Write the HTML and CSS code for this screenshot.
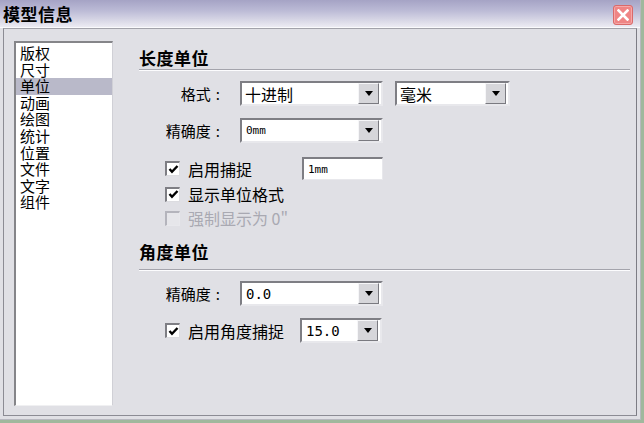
FILE: index.html
```html
<!DOCTYPE html>
<html lang="zh-CN">
<head>
<meta charset="utf-8">
<title>模型信息</title>
<link rel="stylesheet" href="styles.css">
</head>
<body>
<div class="dialog">
  <div class="titlebar">
    <span class="title">模型信息</span>
    <span class="close"><svg width="12" height="12" viewBox="0 0 12 12"><path d="M1.5 1.5 L10.5 10.5 M10.5 1.5 L1.5 10.5" stroke="#fff" stroke-width="2.6" stroke-linecap="square"/></svg></span>
  </div>
  <div class="panel">
    <ul class="nav">
      <li>版权</li>
      <li>尺寸</li>
      <li class="selected">单位</li>
      <li>动画</li>
      <li>绘图</li>
      <li>统计</li>
      <li>位置</li>
      <li>文件</li>
      <li>文字</li>
      <li>组件</li>
    </ul>
    <div class="content">
      <div class="section-title s1">长度单位</div>
      <div class="sep sep1"></div>

      <div class="row r-format">
        <span class="label">格式<span class="colon">:</span></span>
        <div class="combo w-main"><span class="val">十进制</span><span class="btn"><svg width="8" height="5" viewBox="0 0 8 5"><polygon points="0,0 8,0 4,5" fill="#000"/></svg></span></div>
        <div class="combo w-unit"><span class="val">毫米</span><span class="btn"><svg width="8" height="5" viewBox="0 0 8 5"><polygon points="0,0 8,0 4,5" fill="#000"/></svg></span></div>
      </div>

      <div class="row r-prec">
        <span class="label">精确度<span class="colon">:</span></span>
        <div class="combo w-main"><span class="val mono-s">0mm</span><span class="btn"><svg width="8" height="5" viewBox="0 0 8 5"><polygon points="0,0 8,0 4,5" fill="#000"/></svg></span></div>
      </div>

      <div class="check-row cr1">
        <span class="box"><svg width="11" height="11" viewBox="0 0 11 11"><path d="M1.5 5 L4 7.8 L9.5 2" fill="none" stroke="#000" stroke-width="2.4"/></svg></span>
        <span class="ctext w-snap">启用捕捉</span>
        <div class="field"><span class="mono-s">1mm</span></div>
      </div>

      <div class="check-row cr2">
        <span class="box"><svg width="11" height="11" viewBox="0 0 11 11"><path d="M1.5 5 L4 7.8 L9.5 2" fill="none" stroke="#000" stroke-width="2.4"/></svg></span>
        <span class="ctext">显示单位格式</span>
      </div>

      <div class="check-row cr3 disabled">
        <span class="box"></span>
        <span class="ctext">强制显示为 0"</span>
      </div>

      <div class="section-title s2">角度单位</div>
      <div class="sep sep2"></div>

      <div class="row r-aprec">
        <span class="label">精确度<span class="colon">:</span></span>
        <div class="combo w-main"><span class="val mono-l">0.0</span><span class="btn"><svg width="8" height="5" viewBox="0 0 8 5"><polygon points="0,0 8,0 4,5" fill="#000"/></svg></span></div>
      </div>

      <div class="check-row cr4">
        <span class="box"><svg width="11" height="11" viewBox="0 0 11 11"><path d="M1.5 5 L4 7.8 L9.5 2" fill="none" stroke="#000" stroke-width="2.4"/></svg></span>
        <span class="ctext w-asnap">启用角度捕捉</span>
        <div class="combo w-angle"><span class="val mono-l">15.0</span><span class="btn"><svg width="8" height="5" viewBox="0 0 8 5"><polygon points="0,0 8,0 4,5" fill="#000"/></svg></span></div>
      </div>
    </div>
  </div>
</div>
</body>
</html>
```

FILE: styles.css
```css
html, body {
  margin: 0;
  padding: 0;
}

body {
  width: 644px;
  height: 423px;
  overflow: hidden;
  background: #a0b89d;
  font-family: "Noto Sans CJK SC", "Noto Sans", sans-serif;
  color: #000;
}

.dialog {
  width: 641px;
  height: 420px;
  background: #e0e0e5;
  display: flex;
  flex-direction: column;
  box-sizing: border-box;
  border-right: 1px solid #b8b8c0;
  border-bottom: 1px solid #b8b8c0;
}

.titlebar {
  height: 27px;
  flex: none;
  display: flex;
  align-items: center;
  padding: 0 7px 0 3px;
  background: linear-gradient(#a5a3c5 0%, #bcbbd6 40%, #dcdbe8 80%, #ecebf3 100%);
  border-bottom: 1px solid #fafafc;
}

.title {
  font-weight: bold;
  font-size: 17px;
  letter-spacing: 0.5px;
  line-height: 20px;
}

.close {
  margin-left: auto;
  width: 20px;
  height: 20px;
  box-sizing: border-box;
  border-radius: 3px;
  background: #ef8585;
  border: 1px solid #d96a6a;
  box-shadow: inset 0 0 0 1px #f6a8a8;
  display: flex;
  align-items: center;
  justify-content: center;
  margin-top: 2px;
}

.panel {
  flex: 1;
  margin: 0 3px 3px 3px;
  border-top: 1px solid #a2a2aa;
  border-left: 1px solid #8c8c94;
  border-right: 1px solid #7c7c84;
  border-bottom: 1px solid #8c8c94;
  display: flex;
  align-items: flex-start;
  padding: 12px 0 9px 10px;
}

.nav {
  list-style: none;
  margin: 0;
  padding: 2px 0 0 0;
  width: 99px;
  height: 365px;
  box-sizing: border-box;
  background: #fff;
  border-style: solid;
  border-width: 2px 1px 1px 2px;
  border-color: #858589 #d0d0d6 #f0f0f2 #858589;
  font-size: 15px;
  line-height: 16.6px;
}

.nav li {
  padding-left: 4px;
  height: 16.6px;
  white-space: nowrap;
}

.nav li.selected {
  background: #b9b9c9;
}

.content {
  margin-left: 26px;
  width: 491px;
  display: flex;
  flex-direction: column;
}

.section-title {
  font-weight: bold;
  font-size: 17px;
  letter-spacing: 0.5px;
  line-height: 20px;
  height: 20px;
}

.s1 { margin-top: 7px; }
.s2 { margin-top: 14px; }

.sep {
  height: 1px;
  border-top: 1px solid #a4a4ac;
  background: #fcfcfe;
}

.sep1 { margin-top: 1px; }
.sep2 { margin-top: 7px; }

.row {
  display: flex;
  align-items: center;
  height: 25px;
}

.r-format { margin-top: 10px; }
.r-prec { margin-top: 12px; }
.r-aprec { margin-top: 10px; }

.label {
  width: 57px;
  margin-left: 24px;
  margin-right: 20px;
  text-align: right;
  font-size: 15px;
  white-space: nowrap;
}

.colon {
  margin-left: 5px;
}

.combo {
  display: flex;
  box-sizing: border-box;
  height: 25px;
  background: #fff;
  border-style: solid;
  border-width: 2px;
  border-color: #7e7e84 #e8e8ec #e8e8ec #7e7e84;
  padding: 0 2px 0 0;
  align-items: center;
}

.w-main { width: 143px; }
.w-unit { width: 115px; margin-left: 12px; }
.w-angle { width: 82px; height: 25px; }

.combo .val {
  flex: 1;
  padding-left: 3px;
  font-size: 16px;
  white-space: nowrap;
}

.combo .btn {
  width: 21px;
  height: 21px;
  box-sizing: border-box;
  background: #d6d6da;
  border-style: solid;
  border-width: 1px;
  border-color: #f6f6f8 #7a7a80 #7a7a80 #f6f6f8;
  display: flex;
  align-items: center;
  justify-content: center;
}

.mono-s,
.combo .val.mono-s {
  font-family: "DejaVu Sans Mono", monospace;
  font-size: 11px;
  padding-left: 4px;
}

.mono-l,
.combo .val.mono-l {
  font-family: "DejaVu Sans Mono", monospace;
  font-size: 14px;
  padding-left: 4px;
}

.check-row {
  display: flex;
  align-items: center;
  margin-left: 26px;
  height: 20px;
}

.cr1 { margin-top: 14px; height: 23px; }
.cr2 { margin-top: 4px; }
.cr3 { margin-top: 4px; }
.cr4 { margin-top: 12px; height: 25px; }

.box {
  width: 15px;
  height: 15px;
  box-sizing: border-box;
  background: #fff;
  border-style: solid;
  border-width: 2px 1px 1px 2px;
  border-color: #7e7e84 #dcdce0 #dcdce0 #7e7e84;
  display: flex;
  align-items: center;
  justify-content: center;
  flex: none;
}

.ctext {
  margin-left: 8px;
  font-size: 16px;
  white-space: nowrap;
}

.w-snap { width: 114px; }
.w-asnap { width: 112px; }

.field {
  width: 81px;
  height: 23px;
  box-sizing: border-box;
  background: #fff;
  border-style: solid;
  border-width: 2px 1px 1px 2px;
  border-color: #7e7e84 #e8e8ec #e8e8ec #7e7e84;
  display: flex;
  align-items: center;
  padding-left: 0;
}

.disabled .box {
  background: #e6e6ea;
  border-color: #b4b4bc #e8e8ec #e8e8ec #b4b4bc;
}

.disabled .ctext {
  color: #a9a9b2;
}
```
